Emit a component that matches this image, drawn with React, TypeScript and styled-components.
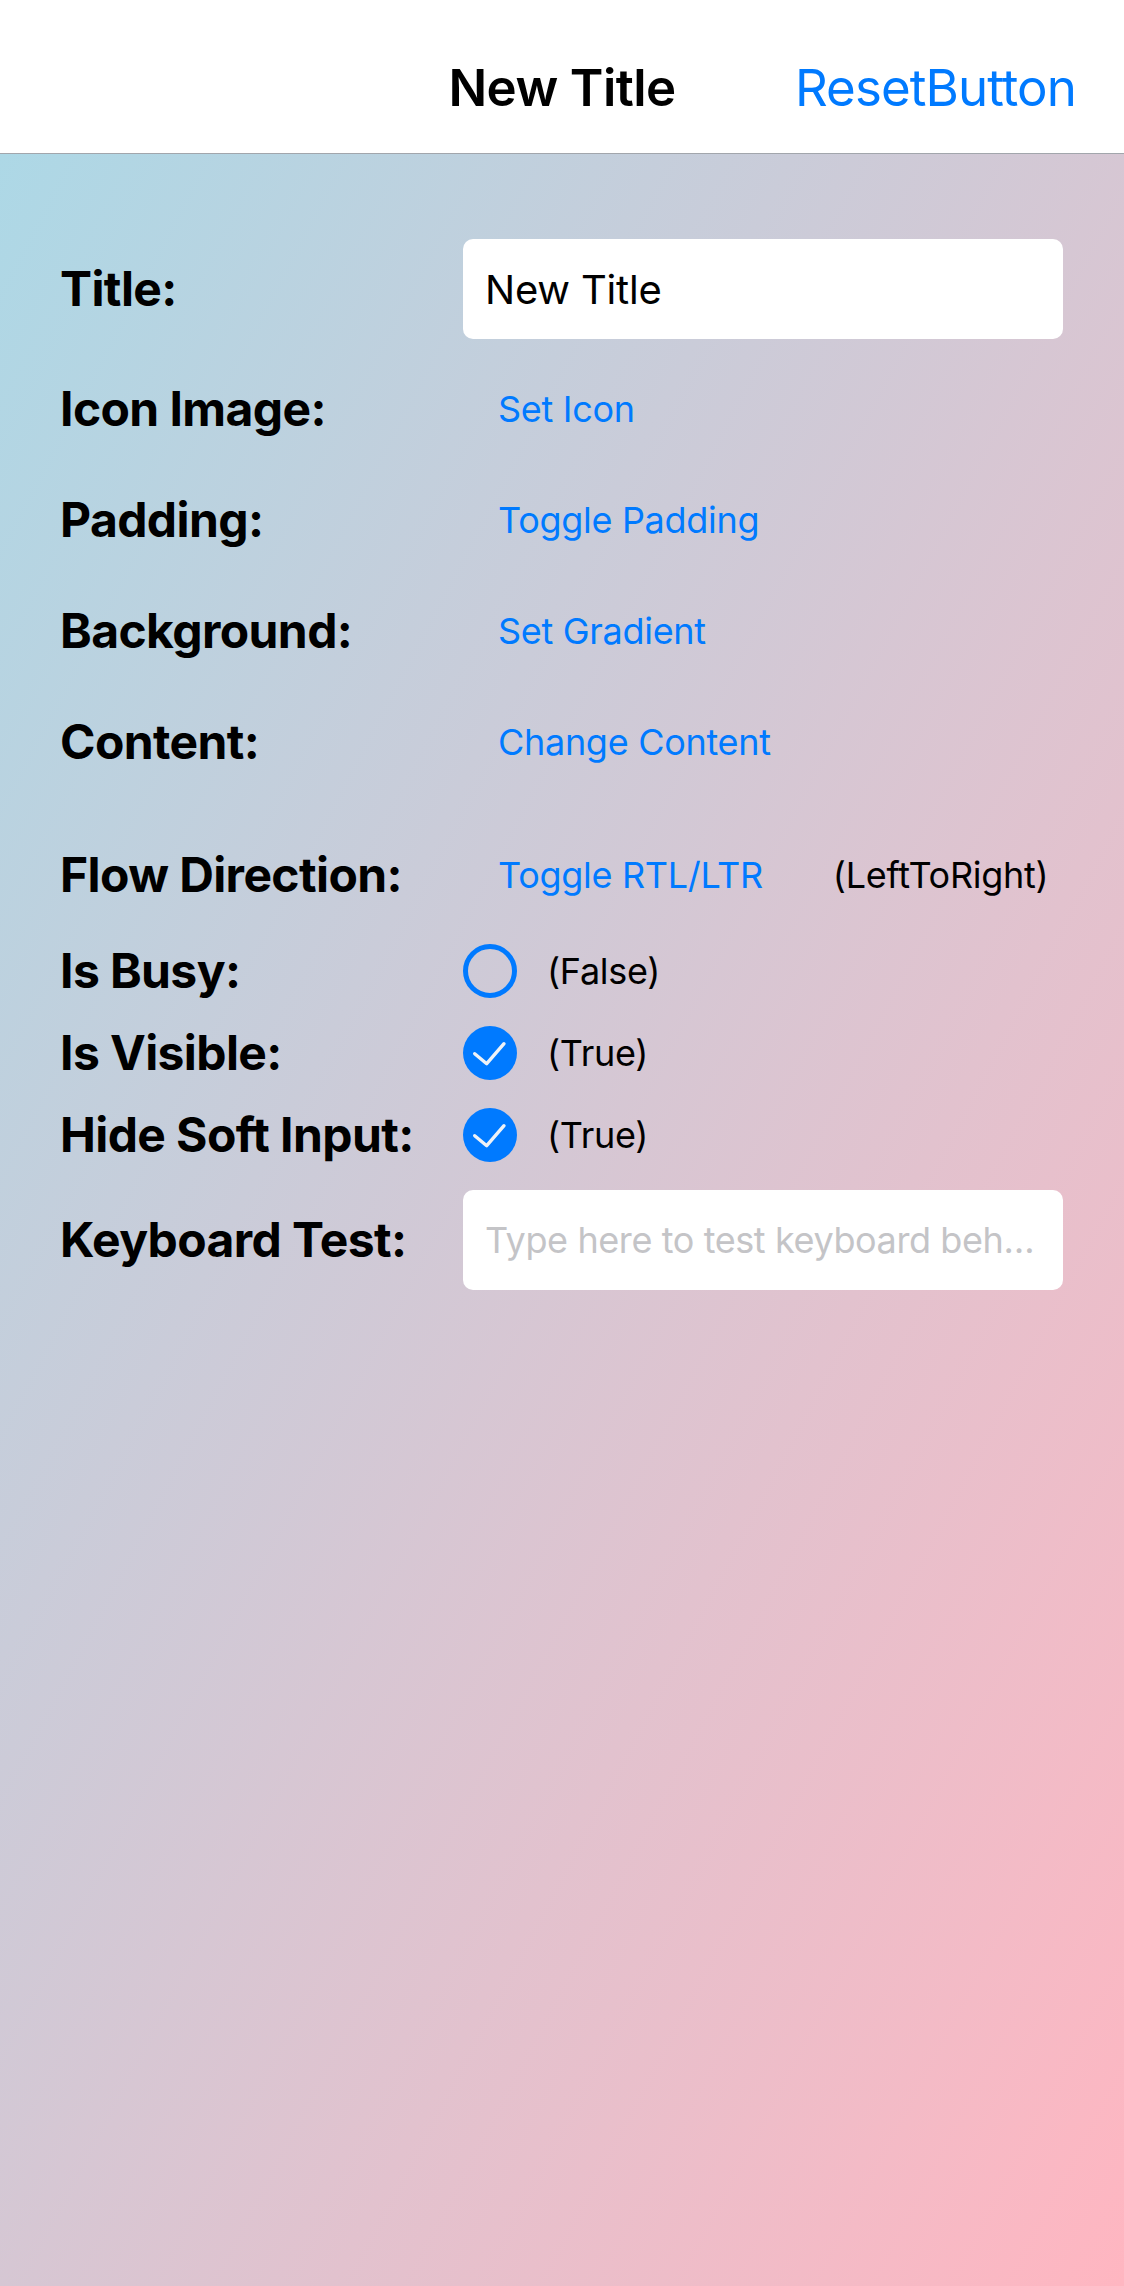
import React from "react";
import styled, { createGlobalStyle } from "styled-components";

const GlobalStyle = createGlobalStyle`
  html, body {
    margin: 0;
    padding: 0;
  }
  body {
    font-family: Inter, "Noto Sans", "Liberation Sans", sans-serif;
    -webkit-font-smoothing: antialiased;
  }
  * {
    box-sizing: border-box;
  }
`;

const Page = styled.div`
  display: flex;
  flex-direction: column;
  min-height: 100vh;
`;

const NavBar = styled.header`
  height: 154px;
  padding: 21px 48px 0;
  background: #ffffff;
  border-bottom: 1px solid #a2a6ac;
  display: grid;
  grid-template-columns: 1fr auto 1fr;
  align-items: center;
`;

const NavTitle = styled.h1`
  grid-column: 2;
  margin: 0;
  font-size: 51px;
  font-weight: 600;
  line-height: 1;
  letter-spacing: -0.6px;
  color: #000;
`;

const NavAction = styled.button`
  justify-self: end;
  padding: 0;
  border: 0;
  background: none;
  font-family: inherit;
  font-size: 51px;
  font-weight: 400;
  line-height: 1;
  letter-spacing: -0.9px;
  color: #007aff;
  cursor: pointer;
`;

const Content = styled.main`
  flex: 1;
  display: flex;
  flex-direction: column;
  gap: 28px;
  padding: 85px 61px 0 60px;
  background: linear-gradient(to bottom right, #add8e6, #ffb6c1);
`;

const Row = styled.div<{ $h: number; $mt?: number }>`
  display: grid;
  grid-template-columns: 403px 1fr;
  align-items: center;
  height: ${(p) => p.$h}px;
  margin-top: ${(p) => p.$mt ?? 0}px;
`;

const Label = styled.span`
  font-size: 48px;
  font-weight: 700;
  line-height: 1;
  letter-spacing: -0.6px;
  color: #000;
  white-space: nowrap;
`;

const Cell = styled.div<{ $gap?: number }>`
  display: flex;
  align-items: center;
  gap: ${(p) => p.$gap ?? 0}px;
  height: 100%;
`;

const Entry = styled.input<{ $fs: number }>`
  width: 100%;
  height: 100%;
  padding: 0 24px 0 22px;
  border: 0;
  border-radius: 10px;
  background: #ffffff;
  font-family: inherit;
  font-size: ${(p) => p.$fs}px;
  letter-spacing: -0.2px;
  color: #000;
  outline: none;
  text-overflow: ellipsis;

  &::placeholder {
    color: #c4c4c7;
    letter-spacing: -0.4px;
  }
`;

const LinkButton = styled.button`
  padding: 0 0 0 35px;
  border: 0;
  background: none;
  font-family: inherit;
  font-size: 36px;
  line-height: 1;
  letter-spacing: -0.3px;
  color: #007aff;
  white-space: nowrap;
  cursor: pointer;
`;

const Status = styled.span`
  font-size: 36px;
  line-height: 1;
  letter-spacing: -0.3px;
  color: #000;
  white-space: nowrap;
`;

const CheckCircle = styled.span<{ $checked: boolean }>`
  display: flex;
  align-items: center;
  justify-content: center;
  flex: none;
  width: 54px;
  height: 54px;
  border-radius: 50%;
  border: ${(p) => (p.$checked ? "0" : "5px solid #007aff")};
  background: ${(p) => (p.$checked ? "#007aff" : "transparent")};
`;

const CheckBox: React.FC<{ checked: boolean }> = ({ checked }) => (
  <CheckCircle $checked={checked}>
    {checked && (
      <svg width="54" height="54" viewBox="0 0 54 54">
        <path
          d="M11.7 27.7 L23.7 37.7 L41 17.7"
          fill="none"
          stroke="#eef2f7"
          strokeWidth="3.4"
          strokeLinecap="round"
          strokeLinejoin="round"
        />
      </svg>
    )}
  </CheckCircle>
);

const buttonRows = [
  { label: "Icon Image:", action: "Set Icon" },
  { label: "Padding:", action: "Toggle Padding" },
  { label: "Background:", action: "Set Gradient" },
  { label: "Content:", action: "Change Content" },
];

const toggles = [
  { label: "Is Busy:", value: false },
  { label: "Is Visible:", value: true },
  { label: "Hide Soft Input:", value: true },
];

export default function App() {
  return (
    <>
      <GlobalStyle />
      <Page>
        <NavBar>
          <NavTitle>New Title</NavTitle>
          <NavAction>ResetButton</NavAction>
        </NavBar>

        <Content>
          <Row $h={100}>
            <Label>Title:</Label>
            <Entry $fs={40} defaultValue="New Title" />
          </Row>

          {buttonRows.map((r) => (
            <Row $h={83} key={r.label}>
              <Label>{r.label}</Label>
              <Cell>
                <LinkButton>{r.action}</LinkButton>
              </Cell>
            </Row>
          ))}

          <Row $h={83} $mt={22}>
            <Label>Flow Direction:</Label>
            <Cell $gap={70}>
              <LinkButton>Toggle RTL/LTR</LinkButton>
              <Status>(LeftToRight)</Status>
            </Cell>
          </Row>

          {toggles.map((t) => (
            <Row $h={54} key={t.label}>
              <Label>{t.label}</Label>
              <Cell $gap={30}>
                <CheckBox checked={t.value} />
                <Status>({t.value ? "True" : "False"})</Status>
              </Cell>
            </Row>
          ))}

          <Row $h={100}>
            <Label>Keyboard Test:</Label>
            <Entry $fs={36} placeholder="Type here to test keyboard behavior" />
          </Row>
        </Content>
      </Page>
    </>
  );
}
